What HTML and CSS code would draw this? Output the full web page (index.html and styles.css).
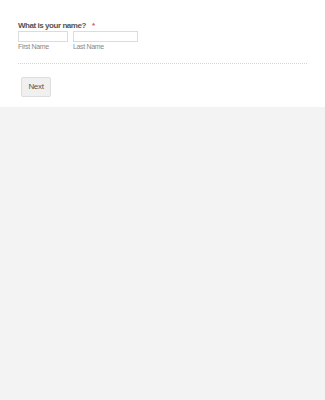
FILE: index.html
```html
<!DOCTYPE html>
<html lang="en">
  <head>
    <meta charset="UTF-8" />
    <meta name="viewport" content="width=device-width, initial-scale=1.0" />
    <title>Form</title>
    <link rel="stylesheet" href="styles.css">
  </head>
  <body>
    <form class="form-all">
      <div class="form-line">
        <label class="form-label">What is your name?<span class="required">*</span></label>
        <div class="name-row">
          <div class="name-field">
            <input type="text" class="form-input" />
            <span class="sublabel">First Name</span>
          </div>
          <div class="name-field">
            <input type="text" class="form-input wide" />
            <span class="sublabel">Last Name</span>
          </div>
        </div>
      </div>
      <div class="form-buttons">
        <button type="button" class="next-btn">Next</button>
      </div>
    </form>
  </body>
</html>
```

FILE: styles.css
```css
* {
  box-sizing: border-box;
  margin: 0;
  padding: 0;
  font-family: "Liberation Sans", Arial, sans-serif;
}

body {
  background-color: #f3f3f3;
  height: 100vh;
}

.form-all {
  background-color: #ffffff;
  height: 107px;
  padding: 21px 18px 0 18px;
}

.form-line {
  border-bottom: 1px dotted #d4d4d4;
  padding-bottom: 12px;
}

.form-label {
  display: block;
  font-size: 8px;
  letter-spacing: -0.45px;
  font-weight: bold;
  color: #555555;
  line-height: 10px;
}

.required {
  color: #e54d4d;
  margin-left: 6px;
}

.name-row {
  display: flex;
  gap: 5px;
}

.name-field {
  display: flex;
  flex-direction: column;
}

.form-input {
  width: 50px;
  height: 11px;
  border: 1px solid #dcdcdc;
  background: #ffffff;
}

.form-input.wide {
  width: 65px;
}

.sublabel {
  font-size: 7px;
  letter-spacing: -0.35px;
  color: #888888;
  line-height: 8px;
  margin-top: 1px;
}

.form-buttons {
  padding: 11px 0 0 3px;
}

.next-btn {
  width: 30px;
  height: 20px;
  font-size: 8px;
  letter-spacing: -0.3px;
  color: #555555;
  background-color: #f0f0f0;
  border: 1px solid #dddddd;
  border-radius: 2px;
}
```
